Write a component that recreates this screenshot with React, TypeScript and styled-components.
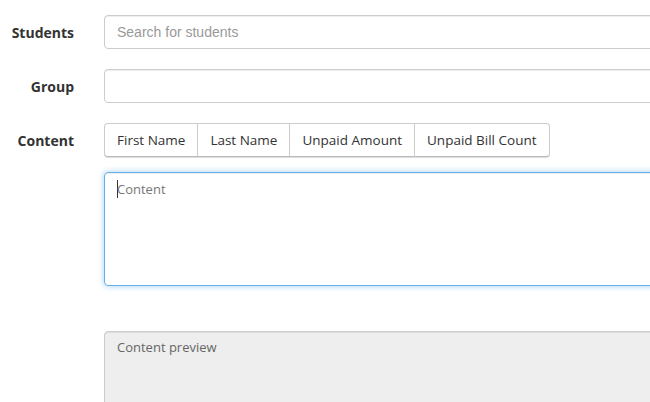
import React from "react";
import styled, { createGlobalStyle } from "styled-components";

const Global = createGlobalStyle`
  html, body { margin: 0; padding: 0; background: #fff; overflow: hidden; }
  body { font-family: "Open Sans", "Liberation Sans", sans-serif; font-size: 13px; color: #333; }
  * { box-sizing: border-box; }
`;

const Form = styled.form`
  padding-top: 15px;
  display: flex;
  flex-direction: column;
  width: 700px;
`;

const Row = styled.div<{ $mt?: number }>`
  display: grid;
  grid-template-columns: 74px 1fr;
  column-gap: 30px;
  align-items: center;
  margin-top: ${(p) => p.$mt ?? 0}px;
`;

const Label = styled.label`
  font-weight: 700;
  font-size: 14px;
  text-align: right;
  color: #333;
`;

const Input = styled.input`
  height: 34px;
  width: 100%;
  border: 1px solid #ccc;
  border-radius: 4px;
  padding: 0 12px;
  font-family: "Liberation Sans", Arial, sans-serif;
  font-size: 14px;
  color: #555;
  box-shadow: inset 0 1px 1px rgba(0, 0, 0, 0.075);
  outline: none;
  &::placeholder { color: #999; }
`;

const BtnGroup = styled.div`
  display: flex;
  justify-self: start;
`;

const Btn = styled.button`
  height: 34px;
  padding: 0 12px;
  background: #fff;
  border: 1px solid #ccc;
  border-bottom-color: #bbb;
  box-shadow: 0 1px 0 #ddd;
  margin-left: -1px;
  font-family: "Open Sans", sans-serif;
  font-size: 13.5px;
  color: #333;
  &:first-child { margin-left: 0; border-radius: 4px 0 0 4px; }
  &:last-child { border-radius: 0 4px 4px 0; }
`;

const TextArea = styled.div`
  height: 114px;
  width: 100%;
  border: 1px solid #66afe9;
  border-radius: 4px;
  box-shadow: inset 0 1px 1px rgba(0,0,0,.075), 0 0 6px rgba(102, 175, 233, 0.6);
  padding: 7px 12px;
  font-size: 13px;
  color: #777;
  display: flex;
  align-items: flex-start;
`;

const Caret = styled.span`
  display: inline-block;
  width: 1px;
  height: 18px;
  background: #333;
  margin-right: -1px;
`;

const Preview = styled.div`
  height: 120px;
  width: 100%;
  border: 1px solid #ccc;
  border-radius: 4px;
  background: #eee;
  box-shadow: inset 0 1px 1px rgba(0,0,0,.075);
  padding: 6px 12px;
  font-size: 13px;
  color: #666;
`;

const Empty = styled.div``;

export default function App() {
  return (
    <>
      <Global />
      <Form>
        <Row>
          <Label>Students</Label>
          <Input placeholder="Search for students" />
        </Row>
        <Row $mt={20}>
          <Label>Group</Label>
          <Input />
        </Row>
        <Row $mt={20}>
          <Label>Content</Label>
          <BtnGroup>
            <Btn type="button">First Name</Btn>
            <Btn type="button">Last Name</Btn>
            <Btn type="button">Unpaid Amount</Btn>
            <Btn type="button">Unpaid Bill Count</Btn>
          </BtnGroup>
        </Row>
        <Row $mt={15}>
          <Empty />
          <TextArea>
            <Caret />
            Content
          </TextArea>
        </Row>
        <Row $mt={45}>
          <Empty />
          <Preview>Content preview</Preview>
        </Row>
      </Form>
    </>
  );
}
